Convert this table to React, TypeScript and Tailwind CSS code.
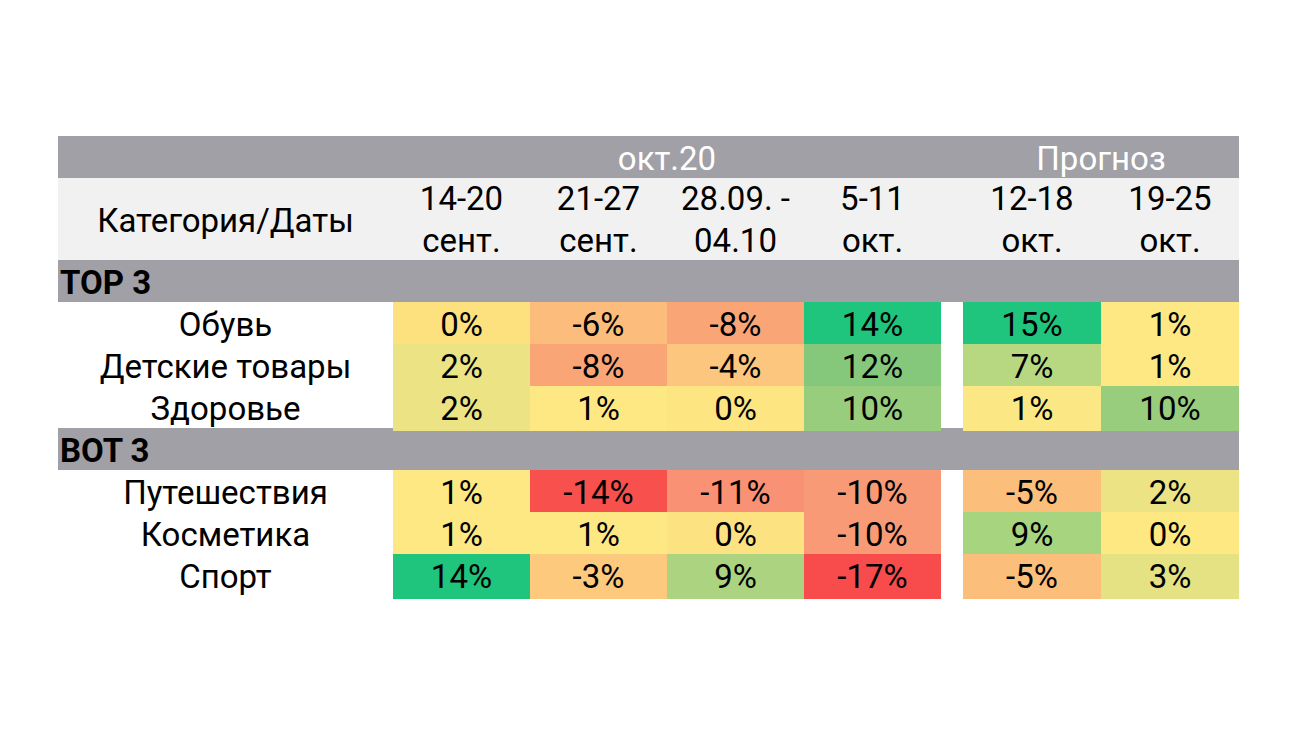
const font = { fontFamily: 'Roboto, "Liberation Sans", sans-serif' };

type Cell = { v: string; c: string };

const grid = 'grid grid-cols-[335px_137px_137px_137px_137px_22px_138px_138px]';

const top: { name: string; cells: Cell[] }[] = [
  {
    name: 'Обувь',
    cells: [
      { v: '0%', c: 'bg-[#fde17f]' },
      { v: '-6%', c: 'bg-[#fcbd7c]' },
      { v: '-8%', c: 'bg-[#faa576]' },
      { v: '14%', c: 'bg-[#1fc47d]' },
      { v: '15%', c: 'bg-[#1fc47d]' },
      { v: '1%', c: 'bg-[#fde884]' },
    ],
  },
  {
    name: 'Детские товары',
    cells: [
      { v: '2%', c: 'bg-[#ebe384]' },
      { v: '-8%', c: 'bg-[#faa576]' },
      { v: '-4%', c: 'bg-[#fdc67e]' },
      { v: '12%', c: 'bg-[#85c87c]' },
      { v: '7%', c: 'bg-[#b7d881]' },
      { v: '1%', c: 'bg-[#fde884]' },
    ],
  },
  {
    name: 'Здоровье',
    cells: [
      { v: '2%', c: 'bg-[#ebe384]' },
      { v: '1%', c: 'bg-[#fde884]' },
      { v: '0%', c: 'bg-[#fde582]' },
      { v: '10%', c: 'bg-[#98cd7d]' },
      { v: '1%', c: 'bg-[#fbe884]' },
      { v: '10%', c: 'bg-[#98cd7d]' },
    ],
  },
];

const bot: { name: string; cells: Cell[] }[] = [
  {
    name: 'Путешествия',
    cells: [
      { v: '1%', c: 'bg-[#fde884]' },
      { v: '-14%', c: 'bg-[#f8504d]' },
      { v: '-11%', c: 'bg-[#f99274]' },
      { v: '-10%', c: 'bg-[#f99a76]' },
      { v: '-5%', c: 'bg-[#fbbe7b]' },
      { v: '2%', c: 'bg-[#ebe384]' },
    ],
  },
  {
    name: 'Косметика',
    cells: [
      { v: '1%', c: 'bg-[#fde884]' },
      { v: '1%', c: 'bg-[#fde884]' },
      { v: '0%', c: 'bg-[#fde282]' },
      { v: '-10%', c: 'bg-[#f99a76]' },
      { v: '9%', c: 'bg-[#a6d47f]' },
      { v: '0%', c: 'bg-[#fee882]' },
    ],
  },
  {
    name: 'Спорт',
    cells: [
      { v: '14%', c: 'bg-[#1fc47d]' },
      { v: '-3%', c: 'bg-[#fdc97d]' },
      { v: '9%', c: 'bg-[#acd37f]' },
      { v: '-17%', c: 'bg-[#f84b4b]' },
      { v: '-5%', c: 'bg-[#fbbe7b]' },
      { v: '3%', c: 'bg-[#e5e283]' },
    ],
  },
];

const dates = [
  ['14-20', 'сент.'],
  ['21-27', 'сент.'],
  ['28.09. -', '04.10'],
  ['5-11', 'окт.'],
];
const forecast = [
  ['12-18', 'окт.'],
  ['19-25', 'окт.'],
];

function DataRow({ name, cells }: { name: string; cells: Cell[] }) {
  return (
    <div className={`${grid} h-[42px] text-[33px] leading-[45px] text-black`}>
      <div className="text-center">{name}</div>
      {cells.slice(0, 4).map((c, i) => (
        <div key={i} className={`${c.c} text-center`}>{c.v}</div>
      ))}
      <div />
      {cells.slice(4).map((c, i) => (
        <div key={i} className={`${c.c} text-center`}>{c.v}</div>
      ))}
    </div>
  );
}

function Section({ title }: { title: string }) {
  return (
    <div className="h-[42px] bg-[#a0a0a6] pl-[2px] text-[33px] font-bold leading-[46px] text-black">
      {title}
    </div>
  );
}

export default function App() {
  return (
    <div className="min-h-[731px] bg-white pl-[58px] pt-[136px]" style={font}>
      <div className="w-[1181px]">
        <div className={`${grid} h-[42px] bg-[#a0a0a6] text-[33px] leading-[46px] text-white`}>
          <div />
          <div className="col-span-4 text-center">окт.20</div>
          <div />
          <div className="col-span-2 text-center">Прогноз</div>
        </div>
        <div className={`${grid} h-[82px] bg-[#f1f1f1] text-[33px] leading-[42px] text-black`}>
          <div className="flex items-center justify-center pt-[2px]">Категория/Даты</div>
          {dates.map(([a, b], i) => (
            <div key={i} className="text-center">
              <div>{a}</div>
              <div>{b}</div>
            </div>
          ))}
          <div />
          {forecast.map(([a, b], i) => (
            <div key={i} className="text-center">
              <div>{a}</div>
              <div>{b}</div>
            </div>
          ))}
        </div>
        <Section title="TOP 3" />
        {top.map((r) => (
          <DataRow key={r.name} {...r} />
        ))}
        <Section title="BOT 3" />
        {bot.map((r) => (
          <DataRow key={r.name} {...r} />
        ))}
      </div>
    </div>
  );
}
